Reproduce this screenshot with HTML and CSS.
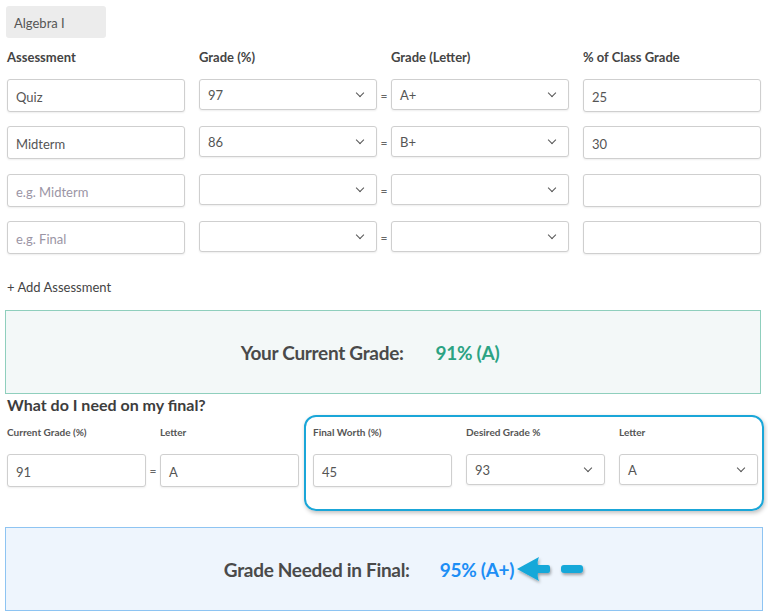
FILE: index.html
```html
<!DOCTYPE html>
<html>
<head>
<meta charset="utf-8">
<link rel="stylesheet" href="styles.css">
</head>
<body>
<div class="page">
  <div class="class-name">Algebra I</div>

  <div class="grid head">
    <div class="h">Assessment</div><div></div>
    <div class="h">Grade (%)</div><div></div>
    <div class="h">Grade (Letter)</div><div></div>
    <div class="h">% of Class Grade</div>
  </div>

  <div class="grid row">
    <div class="field">Quiz</div><div></div>
    <div class="field sel">97<span class="chev"></span></div><div class="eq">=</div>
    <div class="field sel">A+<span class="chev"></span></div><div></div>
    <div class="field">25</div>
  </div>
  <div class="grid row">
    <div class="field">Midterm</div><div></div>
    <div class="field sel">86<span class="chev"></span></div><div class="eq">=</div>
    <div class="field sel">B+<span class="chev"></span></div><div></div>
    <div class="field">30</div>
  </div>
  <div class="grid row">
    <div class="field ph">e.g. Midterm</div><div></div>
    <div class="field sel"><span class="chev"></span></div><div class="eq">=</div>
    <div class="field sel"><span class="chev"></span></div><div></div>
    <div class="field"></div>
  </div>
  <div class="grid row">
    <div class="field ph">e.g. Final</div><div></div>
    <div class="field sel"><span class="chev"></span></div><div class="eq">=</div>
    <div class="field sel"><span class="chev"></span></div><div></div>
    <div class="field"></div>
  </div>

  <div class="add">+ Add Assessment</div>

  <div class="result current">
    <span class="rl">Your Current Grade:</span>
    <span class="rv">91% (A)</span>
  </div>

  <h2 class="q">What do I need on my final?</h2>

  <div class="final">
    <div class="left">
      <div class="col">
        <div class="sl">Current Grade (%)</div>
        <div class="field">91</div>
      </div>
      <div class="eq2">=</div>
      <div class="col">
        <div class="sl">Letter</div>
        <div class="field">A</div>
      </div>
    </div>
    <div class="hl">
      <div class="col">
        <div class="sl">Final Worth (%)</div>
        <div class="field">45</div>
      </div>
      <div class="col">
        <div class="sl">Desired Grade %</div>
        <div class="field sel">93<span class="chev"></span></div>
      </div>
      <div class="col">
        <div class="sl">Letter</div>
        <div class="field sel">A<span class="chev"></span></div>
      </div>
    </div>
  </div>

  <div class="result needed">
    <span class="rl">Grade Needed in Final:</span>
    <span class="rv">95% (A+)</span>
    <svg class="arrow" width="72" height="32" viewBox="0 0 72 32">
      <defs>
        <filter id="sh" x="-20%" y="-30%" width="150%" height="180%">
          <feDropShadow dx="1" dy="2" stdDeviation="1.5" flood-color="#000" flood-opacity="0.35"/>
        </filter>
      </defs>
      <g filter="url(#sh)" fill="#16a8d9">
        <path d="M1 14 L23 2 Q21 7 22 10 L32 10 Q34 10 34 12 L34 16 Q34 18 32 18 L22 18 Q21 21 23 26 Z"/>
        <rect x="45" y="10" width="22" height="8" rx="3"/>
      </g>
    </svg>
  </div>
</div>
</body>
</html>
```

FILE: styles.css
```css
* { box-sizing: border-box; }
html, body { margin: 0; padding: 0; background: #fff; }
body {
  font-family: Lato, "Open Sans", Arial, sans-serif;
  color: #444;
  width: 768px;
  height: 616px;
  overflow: hidden;
}
.page { padding: 6px 7px 0 6px; }

.class-name {
  width: 100px;
  height: 32px;
  background: #ececec;
  border-radius: 3px;
  font-size: 13px;
  color: #555;
  padding: 9px 0 0 8px;
}

.grid {
  display: grid;
  grid-template-columns: 178px 14px 178px 14px 178px 14px 178px;
  margin-left: 1px;
}
.head { margin-top: 11px; height: 30px; }
.h { font-size: 13px; font-weight: 700; color: #444; line-height: 16px; }

.row { height: 47.3px; align-items: start; }

.field {
  height: 33px;
  border: 1px solid #cfcfcf;
  border-radius: 3px;
  background: #fff;
  box-shadow: 0 1px 2px rgba(0,0,0,0.07);
  font-size: 13px;
  color: #555;
  padding: 0 8px;
  line-height: 35px;
  position: relative;
}
.field.sel { height: 31px; line-height: 30px; padding-left: 8px; }
.field.ph { color: #9b95a5; }
.chev {
  position: absolute;
  right: 13px;
  top: 10px;
  width: 6px;
  height: 6px;
  border-right: 1px solid #555;
  border-bottom: 1px solid #555;
  transform: rotate(45deg);
}
.eq { font-size: 12px; color: #666; text-align: center; line-height: 33px; }

.add { font-size: 13px; color: #444; margin-top: 11px; margin-left: 1px; height: 20px; }

.result {
  display: flex;
  align-items: center;
  justify-content: center;
  height: 84px;
  font-weight: 700;
  font-size: 19px;
  letter-spacing: -0.3px;
}
.result .rl { color: #4a4a4a; }
.current {
  margin-top: 11px;
  margin-left: -1px;
  width: 756px;
  background: #f3f8f8;
  border: 1px solid #8fcfbd;
  padding-right: 26px;
}
.current .rv { color: #2ba383; margin-left: 32px; }

.q {
  font-size: 16px;
  font-weight: 700;
  margin: 2px 0 0 1px;
  height: 17px;
  line-height: 17px;
  color: #3d3d3d;
}

.final { display: flex; align-items: flex-start; margin-left: 1px; margin-top: 2px; }
.left { display: flex; padding-top: 11px; }
.col { width: 139px; }
.eq2 { width: 14px; font-size: 12px; text-align: center; padding-top: 28px; color: #666; line-height: 33px; }
.sl { font-size: 10px; font-weight: 700; color: #555; height: 28px; line-height: 12px; }
.hl {
  margin-left: 5px;
  width: 460px;
  height: 96px;
  border: 2px solid #1aa6d8;
  border-radius: 12px;
  padding: 9px 4px 0 7px;
  display: flex;
  gap: 14px;
  box-shadow: 1px 2px 4px rgba(0,0,0,0.25);
}

.needed {
  margin-top: 16px;
  margin-left: -1px;
  width: 758px;
  height: 84px;
  background: #eef5fd;
  border: 1px solid #8ec4f2;
  padding-left: 44px;
}
.needed .rv { color: #1d8ef5; margin-left: 30px; }
.arrow { margin-left: 2px; margin-top: 3px; }
```
